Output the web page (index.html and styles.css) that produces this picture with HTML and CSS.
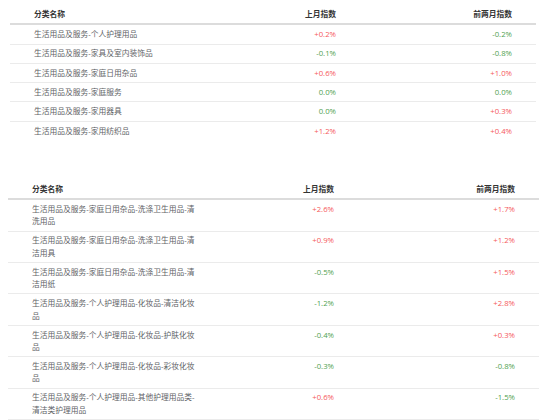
FILE: index.html
```html
<!DOCTYPE html>
<html lang="zh-CN">
<head>
<meta charset="utf-8">
<title>指数表</title>
<link rel="stylesheet" href="styles.css">
</head>
<body>
<div class="page">
  <table class="idx idx-a">
    <colgroup><col class="c-name"><col class="c-m1"><col></colgroup>
    <thead>
      <tr><th class="name">分类名称</th><th class="num">上月指数</th><th class="num">前两月指数</th></tr>
    </thead>
    <tbody>
      <tr><td class="name">生活用品及服务-个人护理用品</td><td class="num up">+0.2%</td><td class="num down">-0.2%</td></tr>
      <tr><td class="name">生活用品及服务-家具及室内装饰品</td><td class="num down">-0.1%</td><td class="num down">-0.8%</td></tr>
      <tr><td class="name">生活用品及服务-家庭日用杂品</td><td class="num up">+0.6%</td><td class="num up">+1.0%</td></tr>
      <tr><td class="name">生活用品及服务-家庭服务</td><td class="num down">0.0%</td><td class="num down">0.0%</td></tr>
      <tr><td class="name">生活用品及服务-家用器具</td><td class="num down">0.0%</td><td class="num up">+0.3%</td></tr>
      <tr><td class="name">生活用品及服务-家用纺织品</td><td class="num up">+1.2%</td><td class="num up">+0.4%</td></tr>
    </tbody>
  </table>

  <table class="idx idx-b">
    <colgroup><col class="c-name"><col class="c-m1"><col></colgroup>
    <thead>
      <tr><th class="name">分类名称</th><th class="num">上月指数</th><th class="num">前两月指数</th></tr>
    </thead>
    <tbody>
      <tr><td class="name">生活用品及服务-家庭日用杂品-洗涤卫生用品-清洗用品</td><td class="num up">+2.6%</td><td class="num up">+1.7%</td></tr>
      <tr><td class="name">生活用品及服务-家庭日用杂品-洗涤卫生用品-清洁用具</td><td class="num up">+0.9%</td><td class="num up">+1.2%</td></tr>
      <tr><td class="name">生活用品及服务-家庭日用杂品-洗涤卫生用品-清洁用纸</td><td class="num down">-0.5%</td><td class="num up">+1.5%</td></tr>
      <tr><td class="name">生活用品及服务-个人护理用品-化妆品-清洁化妆品</td><td class="num down">-1.2%</td><td class="num up">+2.8%</td></tr>
      <tr><td class="name">生活用品及服务-个人护理用品-化妆品-护肤化妆品</td><td class="num down">-0.4%</td><td class="num up">+0.3%</td></tr>
      <tr><td class="name">生活用品及服务-个人护理用品-化妆品-彩妆化妆品</td><td class="num down">-0.3%</td><td class="num down">-0.8%</td></tr>
      <tr><td class="name">生活用品及服务-个人护理用品-其他护理用品类-清洁类护理用品</td><td class="num up">+0.6%</td><td class="num down">-1.5%</td></tr>
    </tbody>
  </table>
</div>
</body>
</html>
```
FILE: styles.css
```css
html, body {
  margin: 0;
  padding: 0;
  background: #ffffff;
}
body {
  font-family: "Open Sans", "Noto Sans CJK SC", sans-serif;
  font-size: 7.75px;
  color: #606266;
}
.page {
  padding-top: 5px;
}
.idx {
  border-collapse: collapse;
  table-layout: fixed;
}
.idx-a {
  width: 526px;
  margin-left: 10px;
}
.idx-b {
  width: 531px;
  margin-left: 8px;
  margin-top: 40px;
}
.c-name { width: 200px; }
.c-m1 { width: 150px; }
.idx th {
  font-weight: 700;
  color: #333333;
  line-height: 12.6px;
  padding: 3.4px 24px 2.3px 24px;
  border-bottom: 2px solid #dcdcdc;
}
.idx td {
  line-height: 12.6px;
  padding: 2.85px 24px 2.85px 24px;
  border-bottom: 1px solid #ebebeb;
  vertical-align: top;
}
.idx-b td {
  line-height: 12.4px;
  padding-top: 2.8px;
  padding-bottom: 2.8px;
}
.idx-a tbody tr:last-child td {
  border-bottom: none;
}
.idx .name {
  text-align: left;
  padding-right: 10px;
}
.idx .num {
  text-align: right;
}
.idx td.up { color: #f5595b; }
.idx td.down { color: #4f9f4f; }
```
